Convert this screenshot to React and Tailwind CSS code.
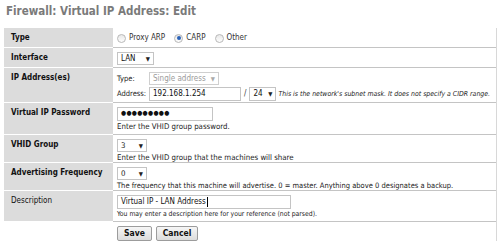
import React from "react";

const F = { fontFamily: '"DejaVu Sans Condensed", "Liberation Sans", sans-serif' };

function Radio({ checked }) {
  return (
    <span className="inline-flex items-center justify-center w-[9px] h-[9px] rounded-full border border-[#b8b8b8] bg-gradient-to-b from-[#e8e8e8] to-[#fdfdfd]">
      {checked && <span className="w-[4px] h-[4px] rounded-full bg-[#2a62b8]" />}
    </span>
  );
}

function Select({ value, w, disabled }) {
  return (
    <span
      className={`inline-flex items-center justify-between whitespace-nowrap h-[13px] border bg-white pl-[3px] pr-[3px] ${
        disabled ? "border-[#cfcfcf] text-[#9a9a9a]" : "border-[#c4c4c4] text-[#111]"
      } ${w}`}
    >
      <span className="leading-none">{value}</span>
      <span className={`text-[6px] leading-none ${disabled ? "text-[#aaa]" : "text-[#222]"}`}>▼</span>
    </span>
  );
}

function Row({ label, bold = true, h, children }) {
  return (
    <div className={`flex ${h}`}>
      <div
        className={`w-[109px] shrink-0 whitespace-nowrap bg-[#dcdcdc] border-b border-white pl-[7px] pt-[4px] text-[8px] text-[#111] ${
          bold ? "font-bold" : ""
        }`}
      >
        {label}
      </div>
      <div className="flex-1 whitespace-nowrap border-b border-[#c4c4c4] pl-[4px] pt-[3px] text-[7.8px] text-[#222]">
        {children}
      </div>
    </div>
  );
}

export default function App() {
  return (
    <div className="w-[500px] h-[252px] bg-white overflow-hidden" style={F}>
      <div className="pl-[6px] pt-[4px] h-[28px] text-[11.5px] font-bold text-[#7a7a7a] leading-[14px]">
        Firewall: Virtual IP Address: Edit
      </div>
      <div className="ml-[4px] w-[493px] border-r border-[#d8d8d8]">
        <Row label="Type" h="h-[20px]">
          <div className="flex items-center h-[14px] gap-[3px] text-[#333] text-[8px]">
            <Radio />
            <span className="mr-[6px]">Proxy ARP</span>
            <Radio checked />
            <span className="mr-[6px]">CARP</span>
            <Radio />
            <span>Other</span>
          </div>
        </Row>
        <Row label="Interface" h="h-[20px]">
          <div className="pt-[1px] text-[8px]">
            <Select value="LAN" w="w-[37px]" />
          </div>
        </Row>
        <Row label="IP Address(es)" h="h-[35px]">
          <div className="flex flex-col gap-[2px] pt-[1px] text-[8px]">
            <div className="flex items-center">
              <span className="w-[32px] text-[7.5px]">Type:</span>
              <Select value="Single address" w="w-[70px]" disabled />
            </div>
            <div className="flex items-center">
              <span className="w-[32px] text-[7.5px]">Address:</span>
              <span className="h-[14px] w-[92px] border border-[#c4c4c4] pl-[3px] flex items-center text-[#111]">
                192.168.1.254
              </span>
              <span className="mx-[3px] text-[#333]">/</span>
              <span className="h-[14px] inline-flex">
                <Select value="24" w="w-[27px] h-[14px]" />
              </span>
              <span className="ml-[2px] text-[6.9px] italic text-[#222]">
                This is the network's subnet mask. It does not specify a CIDR range.
              </span>
            </div>
          </div>
        </Row>
        <Row label="Virtual IP Password" h="h-[32px]">
          <div className="pt-[1px]">
            <div className="h-[14px] w-[96px] border border-[#c4c4c4] pl-[3px] flex items-center text-[#111] text-[6.5px] tracking-[0.3px]">
              ●●●●●●●●●
            </div>
            <div className="leading-[11px]">Enter the VHID group password.</div>
          </div>
        </Row>
        <Row label="VHID Group" h="h-[28px]">
          <div className="pt-[1px]">
            <Select value="3" w="w-[30px]" />
            <div className="leading-[12px]">Enter the VHID group that the machines will share</div>
          </div>
        </Row>
        <Row label="Advertising Frequency" h="h-[28px]">
          <div className="pt-[1px]">
            <Select value="0" w="w-[30px]" />
            <div className="leading-[12px] text-[7.5px]">
              The frequency that this machine will advertise. 0 = master. Anything above 0 designates a backup.
            </div>
          </div>
        </Row>
        <Row label="Description" bold={false} h="h-[31px]">
          <div className="pt-[1px] text-[8px]">
            <div className="h-[14px] w-[174px] border border-[#c4c4c4] pl-[3px] flex items-center text-[#111]">
              Virtual IP - LAN Address<span className="w-[1px] h-[10px] bg-black ml-[1px]" />
            </div>
            <div className="text-[6.8px] leading-[11px]">
              You may enter a description here for your reference (not parsed).
            </div>
          </div>
        </Row>
        <div className="flex gap-[4px] pl-[113px] pt-[4px]">
          <button className="h-[15px] w-[35px] border border-[#9c9c9c] rounded-[2px] bg-gradient-to-b from-[#f6f6f6] to-[#dcdcdc] text-[8.5px] font-bold text-[#111]">
            Save
          </button>
          <button className="h-[15px] w-[42px] border border-[#9c9c9c] rounded-[2px] bg-gradient-to-b from-[#f6f6f6] to-[#dcdcdc] text-[8.5px] font-bold text-[#111]">
            Cancel
          </button>
        </div>
      </div>
    </div>
  );
}
